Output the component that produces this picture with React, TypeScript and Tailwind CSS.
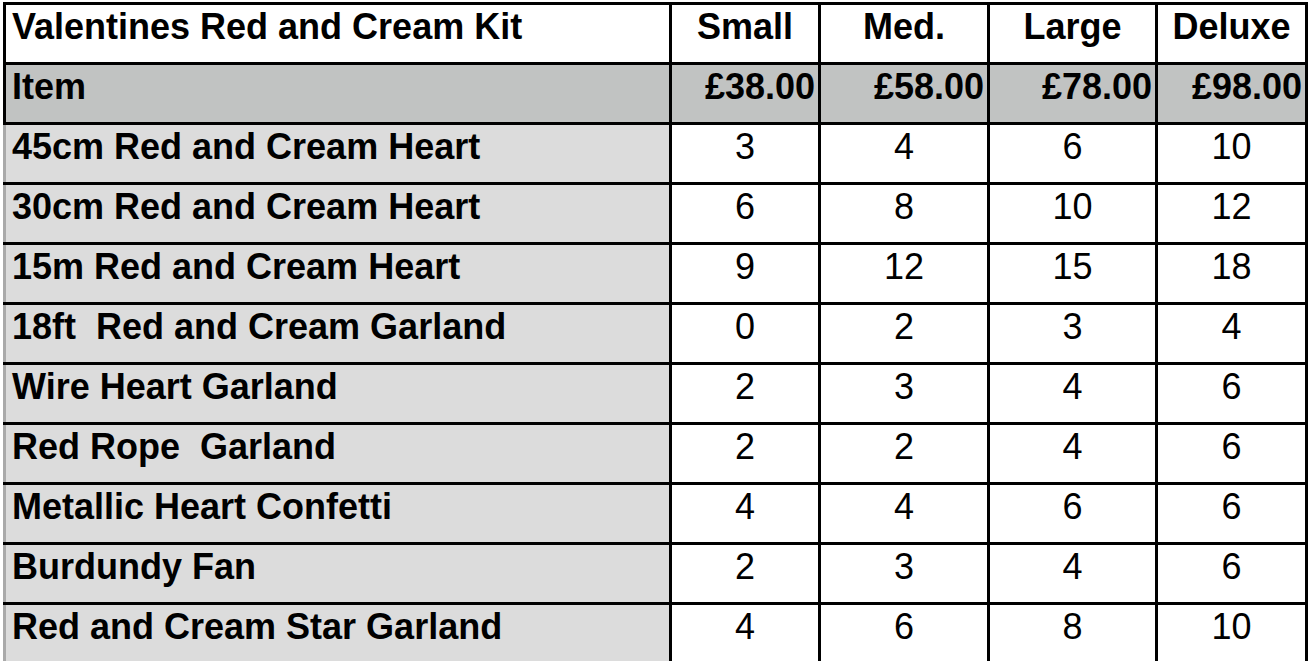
const sizes = ['Small', 'Med.', 'Large', 'Deluxe'];
const prices = ['£38.00', '£58.00', '£78.00', '£98.00'];

const items: [string, number[]][] = [
  ['45cm Red and Cream Heart', [3, 4, 6, 10]],
  ['30cm Red and Cream Heart', [6, 8, 10, 12]],
  ['15m Red and Cream Heart', [9, 12, 15, 18]],
  ['18ft\u00a0 Red and Cream Garland', [0, 2, 3, 4]],
  ['Wire Heart Garland', [2, 3, 4, 6]],
  ['Red Rope\u00a0 Garland', [2, 2, 4, 6]],
  ['Metallic Heart Confetti', [4, 4, 6, 6]],
  ['Burdundy Fan', [2, 3, 4, 6]],
  ['Red and Cream Star Garland', [4, 6, 8, 10]],
];

export default function App() {
  return (
    <div className="h-screen overflow-hidden bg-white pt-[2px] pl-[3px] font-['Liberation_Sans',Arial,sans-serif] text-[36px] leading-none text-black">
      <div className="w-[1305px] bg-black flex flex-col gap-[3px] pt-[3px]">
        {/* title row */}
        <div className="grid grid-cols-[663px_146px_166px_165px_147px] gap-x-[3px] px-[3px] h-[57px]">
          <div className="bg-white font-bold pl-[6px] pt-[4px] whitespace-nowrap">Valentines Red and Cream Kit</div>
          {sizes.map((s) => (
            <div key={s} className="bg-white font-bold text-center pt-[4px]">{s}</div>
          ))}
        </div>

        {/* price row */}
        <div className="grid grid-cols-[663px_146px_166px_165px_147px] gap-x-[3px] px-[3px] h-[57px]">
          <div className="bg-[#c1c3c2] font-bold pl-[6px] pt-[4px]">Item</div>
          {prices.map((p) => (
            <div key={p} className="bg-[#c1c3c2] font-bold text-right pr-[3px] pt-[4px] whitespace-nowrap">{p}</div>
          ))}
        </div>

        {items.map(([name, qty]) => (
          <div key={name} className="grid grid-cols-[666px_146px_166px_165px_147px] gap-x-[3px] pr-[3px] h-[57px]">
            <div className="bg-[#dcdcdc] border-l-[3px] border-[#a9a9a9] font-bold pl-[6px] pt-[4px] whitespace-pre">{name}</div>
            {qty.map((q, i) => (
              <div key={i} className="bg-white text-center pt-[4px]">{q}</div>
            ))}
          </div>
        ))}
      </div>
    </div>
  );
}
